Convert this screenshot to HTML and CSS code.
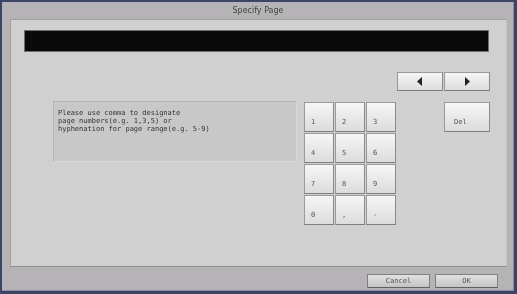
FILE: index.html
```html
<!DOCTYPE html>
<html lang="en">
<head>
  <meta charset="UTF-8" />
  <title>Specify Page</title>
  <link rel="stylesheet" href="styles.css">
</head>
<body>
  <div class="dialog">
    <div class="dialog-title">Specify Page</div>

    <div class="panel">
      <div class="page-input"></div>

      <div class="arrow-row">
        <button class="key arrow" type="button">
          <svg width="6" height="9" viewBox="0 0 6 9"><path d="M5 0 L0 4.5 L5 9 Z" fill="#222"/></svg>
        </button>
        <button class="key arrow" type="button">
          <svg width="6" height="9" viewBox="0 0 6 9"><path d="M1 0 L6 4.5 L1 9 Z" fill="#222"/></svg>
        </button>
      </div>

      <div class="main-row">
        <div class="hint">
          Please use comma to designate<br>
          page numbers(e.g. 1,3,5) or<br>
          hyphenation for page range(e.g. 5-9)
        </div>

        <div class="keypad">
          <button class="key num" type="button">1</button>
          <button class="key num" type="button">2</button>
          <button class="key num" type="button">3</button>
          <button class="key num" type="button">4</button>
          <button class="key num" type="button">5</button>
          <button class="key num" type="button">6</button>
          <button class="key num" type="button">7</button>
          <button class="key num" type="button">8</button>
          <button class="key num" type="button">9</button>
          <button class="key num" type="button">0</button>
          <button class="key num" type="button">,</button>
          <button class="key num" type="button">-</button>
        </div>

        <button class="key del" type="button">Del</button>
      </div>
    </div>

    <div class="dialog-footer">
      <button class="key footer-btn" type="button">Cancel</button>
      <button class="key footer-btn" type="button">OK</button>
    </div>
  </div>
</body>
</html>
```

FILE: styles.css
```css
body {
  margin: 0;
  background: #3c4565;
}

.dialog {
  width: 517px;
  height: 294px;
  box-sizing: border-box;
  border-style: solid;
  border-color: #3c4565;
  border-width: 2px 3px 3px 2px;
  background: #b5b3b5;
  box-shadow: inset -1px -1px 0 #8a8c9c;
  font-family: "DejaVu Sans Mono", "Liberation Mono", monospace;
  font-size: 7px;
  color: #444;
}

/* grey text antialiasing, like the device panel */
.dialog-title,
.panel,
.dialog-footer {
  filter: grayscale(1);
}

.dialog-title {
  height: 17px;
  line-height: 17px;
  text-align: center;
  font-family: "DejaVu Sans", sans-serif;
  font-size: 8px;
  color: #444;
}

.panel {
  margin-left: 8px;
  width: 497px;
  height: 248px;
  box-sizing: border-box;
  background: #d0d0d0;
  border: 1px solid #a0a0a0;
  border-right-color: #c4c4c4;
  border-bottom-color: #8e8e8e;
}

.page-input {
  margin: 10px 0 0 13px;
  width: 465px;
  height: 22px;
  box-sizing: border-box;
  background: #0a0a0a;
  border: 1px solid #6e6e6e;
}

.arrow-row {
  display: flex;
  justify-content: flex-end;
  gap: 1px;
  margin: 20px 16px 0 0;
}

.key {
  margin: 0;
  padding: 0;
  box-sizing: border-box;
  border: 1px solid #9a9a9a;
  border-right-color: #8a8a8a;
  border-bottom-color: #7e7e7e;
  background: linear-gradient(#f6f6f6, #dcdcdc);
  font-family: "DejaVu Sans Mono", "Liberation Mono", monospace;
  font-size: 7px;
  color: #555;
}

.arrow {
  width: 46px;
  height: 19px;
  display: flex;
  align-items: center;
  justify-content: center;
}

.main-row {
  display: flex;
  align-items: flex-start;
  margin-top: 10px;
}

.hint {
  margin: 0 0 0 42px;
  width: 244px;
  height: 61px;
  box-sizing: border-box;
  padding: 7px 4px 0;
  background: #c8c8c8;
  border: 1px solid #b4b4b4;
  border-right-color: #dadada;
  border-bottom-color: #dadada;
  line-height: 8px;
  color: #333;
}

.keypad {
  margin: 1px 0 0 7px;
  display: grid;
  grid-template-columns: repeat(3, 30px);
  grid-auto-rows: 30px;
  gap: 1px;
}

.num {
  display: flex;
  align-items: flex-end;
  padding: 0 0 5px 6px;
  text-align: left;
}

.del {
  margin: 1px 0 0 48px;
  width: 46px;
  height: 30px;
  display: flex;
  align-items: flex-end;
  padding: 0 0 5px 9px;
}

.dialog-footer {
  display: flex;
  justify-content: flex-end;
  gap: 5px;
  padding: 7px 16px 0 0;
}

.footer-btn {
  width: 63px;
  height: 14px;
  font-size: 7px;
  line-height: 12px;
  border-color: #808080;
  border-bottom-color: #606060;
  background: linear-gradient(#e2e2e2, #c4c4c4);
}
```
